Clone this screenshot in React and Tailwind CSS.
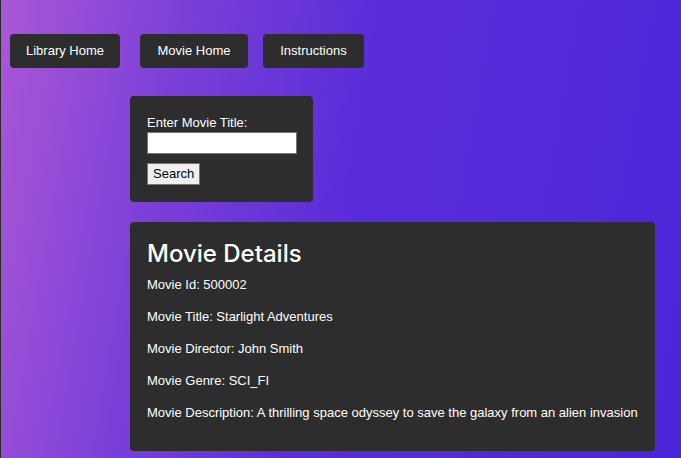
const NavButton = ({ label, width }) => (
  <button className={`h-[34px] whitespace-nowrap rounded-[4px] bg-[#2d2d2d] text-[13px] text-white ${width}`}>
    {label}
  </button>
)

const App = () => {
  return (
    <div
      className="min-h-[458px] w-full border-l border-[#2a2a2a] bg-[linear-gradient(100deg,#a957d6_0%,#7a3fd8_25%,#5a2dd9_50%,#4a26d8_100%)] pt-[34px] pb-[7px] text-white"
      style={{ fontFamily: '"Liberation Sans", Arial, sans-serif' }}
    >
      {/* Top navigation */}
      <nav className="flex items-center pl-[9px]">
        <NavButton label="Library Home" width="w-[110px]" />
        <div className="ml-[20px]"><NavButton label="Movie Home" width="w-[108px]" /></div>
        <div className="ml-[15px]"><NavButton label="Instructions" width="w-[101px]" /></div>
      </nav>

      <div className="ml-[129px] mt-[28px] flex flex-col items-start">
        {/* Search card */}
        <div className="w-[183px] rounded-[4px] bg-[#2d2d2d] px-[17px] pt-[18px] pb-[17px] text-[13px]">
          <label className="block leading-[17px]">Enter Movie Title:</label>
          <input className="mt-[1px] block h-[22px] w-[150px] border border-[#767676] bg-white text-black" />
          <button className="mt-[9px] h-[22px] border border-[#767676] bg-[#efefef] px-[5px] text-[13px] text-black">
            Search
          </button>
        </div>

        {/* Details card */}
        <div className="mt-[20px] w-[525px] rounded-[4px] bg-[#2d2d2d] px-[17px] pt-[15px] pb-[29px] text-[13px]">
          <h2
            className="text-[24px] leading-[34px] font-medium"
            style={{ fontFamily: 'Inter, "Liberation Sans", sans-serif' }}
          >
            Movie Details
          </h2>
          <div className="mt-[4px] space-y-[13px] leading-[19px]">
            <p>Movie Id: 500002</p>
            <p>Movie Title: Starlight Adventures</p>
            <p>Movie Director: John Smith</p>
            <p>Movie Genre: SCI_FI</p>
            <p className="whitespace-nowrap">Movie Description: A thrilling space odyssey to save the galaxy from an alien invasion</p>
          </div>
        </div>
      </div>
    </div>
  )
}

export default App
